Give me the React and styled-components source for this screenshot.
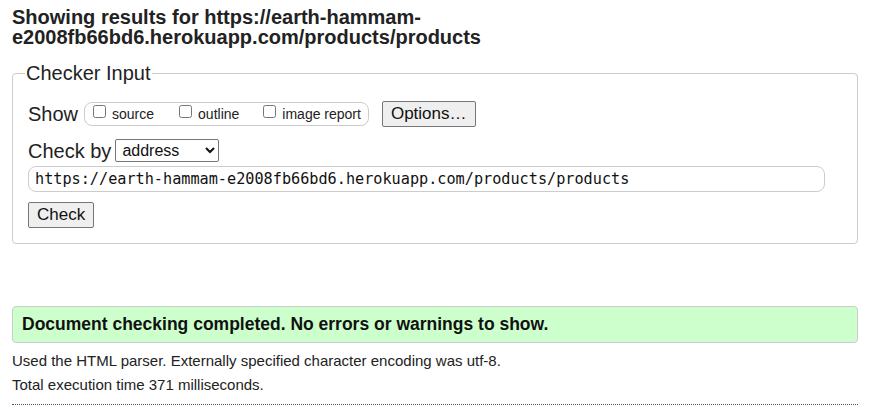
import React from 'react'
import styled, { createGlobalStyle } from 'styled-components'

const GlobalStyle = createGlobalStyle`
  html, body {
    margin: 0;
    padding: 0;
    background: #fff;
  }
  body {
    font-family: "Liberation Sans", Arial, sans-serif;
    color: #222;
  }
`

const Page = styled.div`
  padding: 7px 14px 0 12px;
`

const Title = styled.h2`
  margin: 0;
  font-size: 20px;
  line-height: 20px;
  font-weight: bold;
  color: #222;
`

const Fieldset = styled.fieldset`
  margin: 15px 0 0;
  padding: 16px 15px 15px;
  border: 1px solid #ccc;
  border-radius: 4px;
  display: flex;
  flex-direction: column;
`

const Legend = styled.legend`
  font-size: 20px;
  padding: 0 1px;
  margin-left: -3px;
  color: #222;
`

const Row = styled.div`
  display: flex;
  align-items: center;
  gap: ${p => p.$gap || 4}px;
  margin-top: ${p => p.$mt || 0}px;
`

const Label = styled.span`
  font-size: 20px;
  line-height: 22px;
  color: #222;
`

const Pill = styled.div`
  display: flex;
  align-items: center;
  border: 1px solid #ccc;
  border-radius: 8px;
  height: 22px;
  padding: 0 7px 0 8px;
  margin-left: 2px;
`

const Option = styled.label`
  display: flex;
  align-items: center;
  font-size: 14px;
  color: #222;
  margin-right: ${p => p.$gap || 0}px;
`

const Box = styled.input`
  width: 13px;
  height: 13px;
  margin: 0 6px 6px 0;
`

const Button = styled.button`
  font-family: "Liberation Sans", Arial, sans-serif;
  font-size: 17px;
  color: #111;
  background: #efefef;
  border: 1px solid #767676;
  border-radius: 2px;
  height: 26px;
  padding: 0 ${p => p.$px || 8}px;
  margin-left: ${p => p.$ml || 0}px;
`

const Select = styled.select`
  font-family: "Liberation Sans", Arial, sans-serif;
  font-size: 16px;
  width: 104px;
  height: 23px;
  border: 1px solid #767676;
  border-radius: 2px;
  background: #fff;
  color: #111;
  padding: 0 2px;
`

const UrlInput = styled.input`
  box-sizing: border-box;
  width: 797px;
  height: 26px;
  padding: 0 6px;
  border: 1px solid #ccc;
  border-radius: 8px;
  font-family: "DejaVu Sans Mono", "Liberation Mono", monospace;
  font-size: 15.2px;
  color: #111;
  outline: none;
`

const Success = styled.div`
  margin-top: 62px;
  background: #ccffcc;
  border: 1px solid #ccc;
  border-radius: 4px;
  padding: 0 9px;
  height: 35px;
  display: flex;
  align-items: center;
  font-size: 17.5px;
  font-weight: bold;
  color: #111;
`

const Note = styled.p`
  margin: ${p => p.$mt || 0}px 0 0;
  font-size: 15px;
  line-height: 24px;
  color: #222;
`

const Rule = styled.hr`
  margin: 7px 0 0;
  border: 0;
  border-top: 1px dotted #555;
`

export default function App() {
  return (
    <>
      <GlobalStyle />
      <Page>
        <Title>
          Showing results for https://earth-hammam-
          <br />
          e2008fb66bd6.herokuapp.com/products/products
        </Title>
        <Fieldset>
          <Legend>Checker Input</Legend>
          <Row $gap={4}>
            <Label>Show</Label>
            <Pill>
              <Option $gap={25}><Box type="checkbox" />source</Option>
              <Option $gap={24}><Box type="checkbox" />outline</Option>
              <Option><Box type="checkbox" />image report</Option>
            </Pill>
            <Button $ml={9}>Options…</Button>
          </Row>
          <Row $gap={4} $mt={12}>
            <Label>Check by</Label>
            <Select defaultValue="address">
              <option value="address">address</option>
              <option value="file">file upload</option>
              <option value="text">text input</option>
            </Select>
          </Row>
          <Row $mt={4}>
            <UrlInput
              type="url"
              defaultValue="https://earth-hammam-e2008fb66bd6.herokuapp.com/products/products"
            />
          </Row>
          <Row $mt={10}>
            <Button>Check</Button>
          </Row>
        </Fieldset>
        <Success>Document checking completed. No errors or warnings to show.</Success>
        <Note $mt={6}>Used the HTML parser. Externally specified character encoding was utf-8.</Note>
        <Note>Total execution time 371 milliseconds.</Note>
        <Rule />
      </Page>
    </>
  )
}
